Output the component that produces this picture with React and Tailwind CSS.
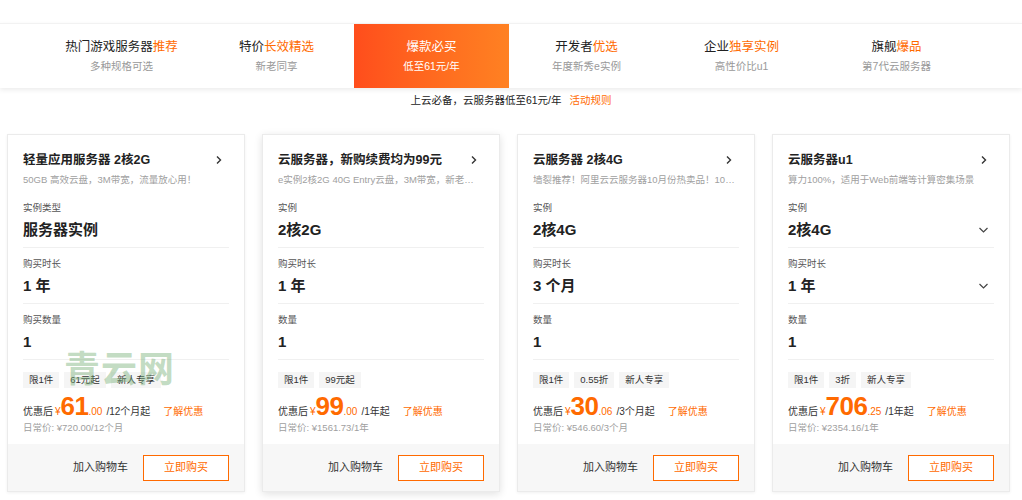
import React from "react";

const FONT = { fontFamily: '"Liberation Sans", "Noto Sans CJK SC", sans-serif' };

const tabs = [
  { a: "热门游戏服务器", b: "推荐", sub: "多种规格可选" },
  { a: "特价", b: "长效精选", sub: "新老同享" },
  { a: "爆款必买", b: "", sub: "低至61元/年", active: true },
  { a: "开发者", b: "优选", sub: "年度新秀e实例" },
  { a: "企业", b: "独享实例", sub: "高性价比u1" },
  { a: "旗舰", b: "爆品", sub: "第7代云服务器" },
];

const cards = [
  {
    title: "轻量应用服务器 2核2G",
    desc: "50GB 高效云盘，3M带宽，流量放心用！",
    fields: [
      ["实例类型", "服务器实例"],
      ["购买时长", "1 年"],
      ["购买数量", "1"],
    ],
    tags: ["限1件", "61元起", "新人专享"],
    price: "61",
    cents: ".00",
    unit: "/12个月起",
    daily: "日常价: ¥720.00/12个月",
  },
  {
    title: "云服务器，新购续费均为99元",
    desc: "e实例2核2G 40G Entry云盘，3M带宽，新老同享，续费不涨价",
    fields: [
      ["实例", "2核2G"],
      ["购买时长", "1 年"],
      ["数量", "1"],
    ],
    tags: ["限1件", "99元起"],
    price: "99",
    cents: ".00",
    unit: "/1年起",
    daily: "日常价: ¥1561.73/1年",
    raised: true,
  },
  {
    title: "云服务器 2核4G",
    desc: "墙裂推荐！阿里云云服务器10月份热卖品！10月限时特惠",
    fields: [
      ["实例", "2核4G"],
      ["购买时长", "3 个月"],
      ["数量", "1"],
    ],
    tags: ["限1件", "0.55折", "新人专享"],
    price: "30",
    cents: ".06",
    unit: "/3个月起",
    daily: "日常价: ¥546.60/3个月",
  },
  {
    title: "云服务器u1",
    desc: "算力100%，适用于Web前端等计算密集场景",
    fields: [
      ["实例", "2核4G", true],
      ["购买时长", "1 年", true],
      ["数量", "1"],
    ],
    tags: ["限1件", "3折", "新人专享"],
    price: "706",
    cents: ".25",
    unit: "/1年起",
    daily: "日常价: ¥2354.16/1年",
  },
];

function ChevronRight() {
  return (
    <svg width="8" height="10" viewBox="0 0 8 10" fill="none">
      <path d="M2 1.5 L5.5 5 L2 8.5" stroke="#333" strokeWidth="1.4" />
    </svg>
  );
}

function ChevronDown() {
  return (
    <svg width="11" height="8" viewBox="0 0 11 8" fill="none">
      <path d="M1.5 2 L5.5 6 L9.5 2" stroke="#444" strokeWidth="1.2" />
    </svg>
  );
}

function Card({ c }) {
  return (
    <div
      className={[
        "w-[238px] h-[358px] flex flex-col bg-white border border-[#ebebeb]",
        c.raised ? "shadow-[0_2px_8px_rgba(0,0,0,0.12)]" : "shadow-[0_1px_3px_rgba(0,0,0,0.06)]",
      ].join(" ")}
    >
      <div className="px-[15px] pt-[17px] flex-1">
        <div className="flex items-center justify-between h-[16px]">
          <span className="text-[12.5px] font-semibold text-[#222] leading-[16px]">{c.title}</span>
          <span className="mr-[6px]"><ChevronRight /></span>
        </div>
        <div className="mt-[5px] text-[9.5px] leading-[14px] text-[#a0a0a0] truncate pr-[4px]">{c.desc}</div>

        <div className="mt-[5px]">
          {c.fields.map(([label, value, select]) => (
            <div key={label} className="pt-[9px] pb-[7px] border-b border-[#f0f0f0]">
              <div className="text-[9.5px] leading-[14px] text-[#555]">{label}</div>
              <div className="mt-[5px] flex items-center justify-between h-[20px]">
                <span className="text-[15px] leading-[20px] font-semibold text-[#222]">{value}</span>
                {select && <span className="mr-[5px]"><ChevronDown /></span>}
              </div>
            </div>
          ))}
        </div>

        <div className="mt-[12px] flex gap-[5px]">
          {c.tags.map((t) => (
            <span key={t} className="h-[16px] px-[6px] bg-[#f5f5f5] text-[9.5px] leading-[16px] text-[#333]">
              {t}
            </span>
          ))}
        </div>

        <div className="mt-[6px] flex items-baseline h-[24px] leading-[24px]">
          <span className="text-[10px] text-[#333]">优惠后</span>
          <span className="text-[10px] text-[#ff6a00] ml-[2px]">¥</span>
          <span className="text-[26px] font-bold text-[#ff6a00] tracking-[-0.5px]">{c.price}</span>
          <span className="text-[10px] text-[#ff6a00]">{c.cents}</span>
          <span className="text-[10px] text-[#333] ml-[4px]">{c.unit}</span>
          <span className="text-[10px] text-[#ff6a00] ml-[13px]">了解优惠</span>
        </div>
        <div className="mt-[3px] text-[9.5px] leading-[14px] text-[#a0a0a0]">{c.daily}</div>
      </div>

      <div className="h-[47px] bg-[#f7f7f7] flex items-center justify-end px-[15px]">
        <span className="text-[11px] text-[#333]">加入购物车</span>
        <button
          type="button"
          className="ml-[15px] w-[86px] h-[26px] bg-white border border-[#ff6a00] text-[#ff6a00] text-[11px]"
        >
          立即购买
        </button>
      </div>
    </div>
  );
}

export default function App() {
  return (
    <div className="relative w-[1022px] h-[500px] bg-white overflow-hidden" style={FONT}>
      {/* tab bar */}
      <div className="mt-[23px] h-[65px] bg-white border-t border-[#f2f2f2] shadow-[0_2px_5px_rgba(0,0,0,0.08)]">
        <div className="w-[930px] ml-[44px] h-full flex">
          {tabs.map((t) => (
            <div
              key={t.a}
              className={[
                "w-[155px] h-full flex flex-col items-center justify-center gap-[3px]",
                t.active ? "bg-gradient-to-r from-[#ff4d1c] to-[#ff8122]" : "",
              ].join(" ")}
            >
              <div className={`text-[12.5px] leading-[17px] ${t.active ? "text-white" : "text-[#222]"}`}>
                {t.a}
                <span className={t.active ? "text-white" : "text-[#ff6a00]"}>{t.b}</span>
              </div>
              <div className={`text-[10.5px] leading-[14px] ${t.active ? "text-white" : "text-[#999]"}`}>{t.sub}</div>
            </div>
          ))}
        </div>
      </div>

      <div className="mt-[4px] h-[16px] text-center text-[10.5px] leading-[16px] text-[#222]">
        上云必备，云服务器低至61元/年
        <span className="ml-[8px] text-[#ff6a00]">活动规则</span>
      </div>

      {/* cards */}
      <div className="mt-[26px] pl-[7px] flex gap-[17px]">
        {cards.map((c) => (
          <Card key={c.title} c={c} />
        ))}
      </div>

      {/* watermark */}
      <div className="absolute left-[64px] top-[349px] text-[36px] leading-[42px] font-bold tracking-[1px] text-[rgba(120,175,120,0.45)] pointer-events-none">
        青云网
      </div>
    </div>
  );
}
